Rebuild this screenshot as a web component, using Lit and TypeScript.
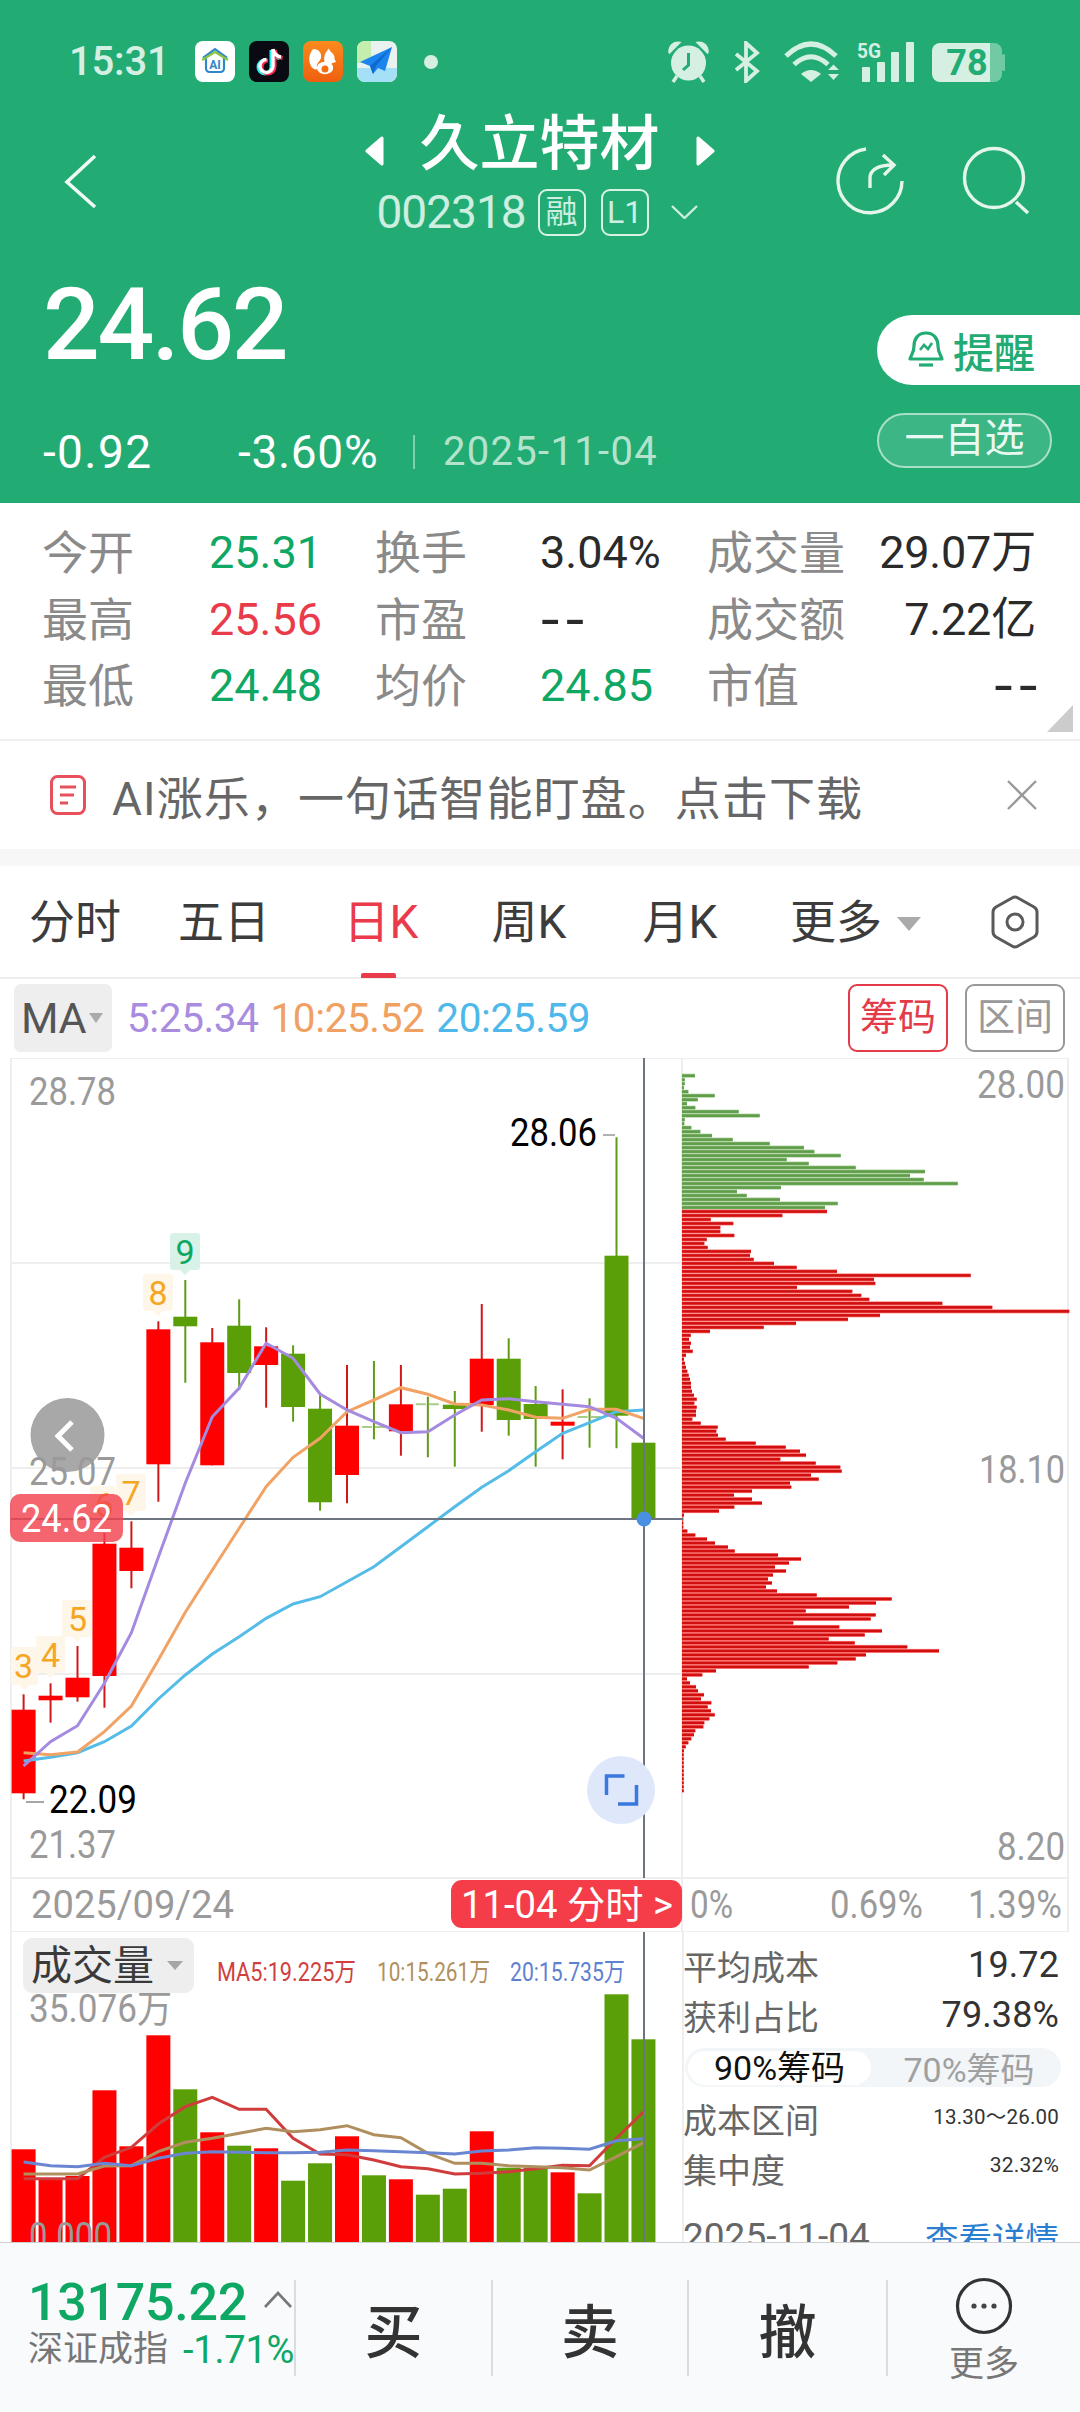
import { LitElement, html, css, svg } from "lit";
import { customElement } from "lit/decorators.js";

const SANS = `Roboto, "Noto Sans CJK SC", sans-serif`;
const cx = (i: number) => 23.6 + 26.95 * i;

// [isRed, bodyTop, bodyBottom, wickTop, wickBottom]; body 0 height means a flat doji
const candles: [number, number, number, number, number][] = [
  [1, 1709.7, 1793.3, 1694.3, 1799.3], [1, 1695.7, 1700.3, 1683.3, 1722.7], [1, 1677.7, 1697.3, 1646, 1701.7],
  [1, 1543.7, 1676, 1533, 1707.7], [1, 1547.7, 1571, 1521.3, 1588.3], [1, 1329.3, 1464.3, 1321.3, 1501.7],
  [0, 1316.7, 1326.3, 1280, 1382.7], [1, 1342.3, 1465.3, 1328, 1465.3], [0, 1325.7, 1373, 1299.3, 1390],
  [1, 1346.3, 1365, 1327.3, 1407.7], [0, 1353.7, 1407, 1345.3, 1421.7], [0, 1408.7, 1502.3, 1395.3, 1510.7],
  [1, 1425.7, 1475, 1365, 1503.3], [0, 1427, 1428.4, 1361, 1439.3], [1, 1404.3, 1431.3, 1365, 1455.7],
  [0, 1404.3, 1405.7, 1396.7, 1457.3], [0, 1404.7, 1409, 1391, 1466.7], [1, 1358.7, 1405, 1304, 1431.7],
  [0, 1358.7, 1420, 1338.3, 1435.7], [0, 1404, 1419, 1386, 1466.7], [1, 1421.7, 1425.7, 1389.3, 1459.3],
  [0, 1417, 1418.4, 1398.3, 1447.7], [0, 1255.7, 1415.7, 1137.3, 1448.3], [0, 1442.7, 1518.3, 1442.7, 1518.3],
];

const ma5 = [1766, 1741.7, 1725.7, 1683.3, 1632.7, 1557.3, 1483, 1416.7, 1388, 1343.3, 1358.3, 1394, 1410, 1421.7, 1432.7, 1431.7, 1415, 1400, 1398.7, 1401.7, 1404.3, 1406.7, 1418.3, 1438.3];
const ma10 = [1752.7, 1754.7, 1752, 1731.7, 1706, 1660, 1612.3, 1570, 1528.3, 1486.7, 1457.3, 1438.3, 1411.7, 1400, 1387.7, 1394.3, 1404, 1405, 1410, 1417.3, 1418.3, 1409.3, 1409.3, 1418.3];
const ma20 = [1761, 1757.3, 1752.7, 1741.7, 1726, 1699, 1675, 1654, 1636.7, 1618.3, 1604, 1596.7, 1581.7, 1566.7, 1546.7, 1526.7, 1506.7, 1487.3, 1470.7, 1451.7, 1433.3, 1422.7, 1411.7, 1410];

const greenRows = [75, 44, 44, 42, 55, 134, 83, 51, 76, 206, 269, 44, 43, 64, 91, 126, 188, 299, 402, 433, 512, 350, 416, 557, 765, 720, 761, 863, 333, 201, 230, 330, 503, 465];
const redRows = [471, 337, 122, 190, 151, 151, 193, 110, 103, 113, 243, 240, 251, 312, 380, 501, 902, 612, 616, 381, 547, 574, 598, 817, 967, 1198, 630, 534, 378, 281, 120, 62, 57, 63, 60, 68, 48, 42, 45, 48, 52, 56, 60, 63, 63, 66, 72, 80, 73, 80, 78, 78, 67, 92, 143, 139, 144, 167, 257, 347, 390, 408, 331, 437, 511, 515, 423, 446, 360, 364, 246, 192, 246, 276, 193, 147, 42, 40, 40, 40, 52, 76, 111, 135, 174, 194, 324, 393, 357, 315, 348, 309, 294, 306, 288, 321, 440, 665, 618, 537, 407, 617, 602, 370, 508, 636, 584, 476, 554, 712, 807, 588, 557, 502, 416, 138, 97, 51, 60, 78, 84, 102, 93, 124, 113, 123, 134, 118, 103, 100, 76, 72, 64, 55, 47, 42, 41, 41, 41, 41, 41, 41, 41, 41, 41, 41];

const volumes: [number, number][] = [
  [1, 2149.3], [1, 2178.3], [1, 2176], [1, 2090.3], [1, 2146.3], [1, 2035.3], [0, 2089.3], [1, 2132.3],
  [0, 2145.7], [1, 2148.3], [0, 2180.7], [0, 2163.3], [1, 2136.3], [0, 2175.3], [1, 2179.3], [0, 2194.7],
  [0, 2188.7], [1, 2131.3], [0, 2167.7], [0, 2168], [1, 2172.3], [0, 2193.3], [0, 1994.3], [0, 2039.3],
];
const vma = (a: number[]) => a.map((z, i) => `${cx(i).toFixed(1)},${(1900 + z / 3).toFixed(1)}`).join(" ");
const v5 = [836, 836, 836, 772, 742, 672, 620, 592, 628, 628, 715, 762, 764, 780, 800, 806, 822, 820, 815, 806, 796, 797, 715, 635];
const v10 = [822, 822, 822, 798, 797, 755, 727, 715, 700, 685, 695, 689, 677, 704, 713, 760, 790, 790, 797, 800, 803, 810, 770, 728];
const v20 = [786, 797, 800, 790, 797, 775, 760, 755, 757, 758, 758, 757, 750, 752, 755, 758, 762, 753, 750, 743, 745, 748, 722, 716];

const line = (a: number[]) => a.map((y, i) => `${cx(i).toFixed(1)},${y}`).join(" ");

const numTags: [string, number, number, number, number, number][] = [
  // text, boxX, boxY, boxW, boxH, text centre
  ["6", 90, 1486, 25, 38, 104], ["3", 11, 1647, 27, 38, 23.6], ["4", 36, 1636, 29, 37, 50.5], ["5", 62, 1600, 30, 37, 77.6],
  ["7", 116, 1474, 30, 37, 131], ["8", 143, 1274, 30, 37, 158],
];

@customElement("app-root")
export class AppRoot extends LitElement {
  static styles = css`
    :host { display: block; width: 1080px; height: 2412px; overflow: hidden; background: #fff; font-family: ${css([SANS] as any)}; position: relative; }
    svg { display: block; flex: none; }

    .head { height: 503px; background: #22ac73; color: #fff; box-sizing: border-box; }
    .status { height: 113px; box-sizing: border-box; padding: 41px 75px 0 69px; display: flex; align-items: flex-start; }
    .time { width: 126px; font-size: 40px; line-height: 42px; color: #d5efe3; font-weight: 500; letter-spacing: -0.2px; }
    .apps { display: flex; gap: 14px; }
    .dot { width: 14px; height: 14px; border-radius: 50%; background: #d5efe3; margin: 14px 0 0 27px; }
    .sysicons { margin-left: auto; display: flex; align-items: flex-start; }
    .nav { height: 122px; display: grid; grid-template-columns: 1fr 360px 1fr; }
    .back { padding: 40px 0 0 64px; }
    .center { display: flex; flex-direction: column; align-items: center; }
    .titlerow { display: flex; align-items: center; gap: 35px; height: 64px; }
    .tri { margin-top: 12px; }
    .title { font-size: 60px; line-height: 64px; font-weight: 500; white-space: nowrap; }
    .subrow { display: flex; align-items: center; height: 48px; margin-top: 11px; margin-right: 6px; color: #cdeee0; }
    .code { font-size: 46px; line-height: 48px; letter-spacing: -1px; width: 161px; }
    .badge { box-sizing: border-box; width: 48px; height: 47px; border: 2px solid #d9f2e7; border-radius: 9px; display: flex; align-items: center; justify-content: center; font-size: 32px; line-height: 1; margin-right: 15px; }
    .chev { margin-left: 7px; }
    .actions { display: flex; justify-content: flex-end; gap: 58px; padding: 33px 48px 0 0; align-items: flex-start; }
    .pricezone { display: flex; justify-content: space-between; height: 268px; box-sizing: border-box; }
    .priceleft { padding-top: 40px; }
    .price { font-size: 100px; line-height: 100px; font-weight: 500; margin-left: 43px; letter-spacing: -2.4px; }
    .changes { display: flex; align-items: center; height: 46px; margin-top: 54px; font-size: 46px; line-height: 46px; padding-left: 43px; }
    .c1 { width: 195px; letter-spacing: 1.4px; }
    .c2 { width: 175px; letter-spacing: 0.7px; }
    .sep { width: 2px; height: 34px; background: #7fd0ac; margin-right: 28px; }
    .date { font-size: 40px; color: #b4e3cd; letter-spacing: 1.3px; }
    .priceright { width: 203px; padding-top: 80px; }
    .remind { height: 70px; background: #fff; border-radius: 35px 0 0 35px; display: flex; align-items: center; padding-left: 31px; gap: 9px; color: #22ac73; font-size: 41px; font-weight: 500; }
    .fav { box-sizing: border-box; width: 175px; height: 55px; margin-top: 28px; border: 2px solid #a9dfc6; background: rgba(255,255,255,0.12); border-radius: 28px; text-align: center; font-size: 40px; line-height: 48px; color: #e9f8f1; }

    .stats { position: relative; box-sizing: border-box; height: 236px; padding: 17px 0 0 42px; display: grid; grid-template-columns: 167px 166px 165px 167px 130px 199px; grid-auto-rows: 66.5px; align-items: center; }
    .lb { font-size: 46px; line-height: 54px; color: #8a8a8a; white-space: nowrap; }
    .val { font-size: 45px; line-height: 54px; color: #2a2a2a; white-space: nowrap; }
    .up { color: #ea3b4b; }
    .down { color: #0ea764; }
    .end { text-align: right; letter-spacing: -0.2px; }
    .dash { display: inline-block; transform: scaleX(1.35); transform-origin: left center; letter-spacing: 3px; font-weight: 500; }
    .end .dash { transform-origin: right center; letter-spacing: 3px; margin-right: -7px; }
    .corner { position: absolute; right: 7px; bottom: 7px; width: 26px; height: 27px; background: #cccccc; clip-path: polygon(100% 0, 100% 100%, 0 100%); }
    .rule { height: 2px; background: #f0f0f0; }
    .banner { height: 108px; display: flex; align-items: center; padding: 0 42px 0 50px; color: #666; font-size: 46px; letter-spacing: 1.1px; white-space: nowrap; }
    .banner span { margin-left: 26px; }
    .banner svg:last-child { margin-left: auto; }
    .band { height: 17px; background: #f7f7f7; }

    .tabs { height: 111px; border-bottom: 2px solid #eeeeee; display: grid; grid-template-columns: 150px 148px 166px 130px 172px 1fr; align-items: center; font-size: 46px; line-height: 54px; color: #3c3c3c; }
    .tab { text-align: center; white-space: nowrap; }
    .tab.on { color: #ea3b4b; position: relative; }
    .tab.on::after { content: ""; position: absolute; left: 63px; top: 78px; width: 35px; height: 5px; border-radius: 2px 2px 0 0; background: #ea3b4b; }
    .more { display: flex; align-items: center; padding: 0 40px 0 24px; }
    .more i { width: 0; height: 0; border: 12px solid transparent; border-top: 14px solid #aaa; border-bottom: 0; margin: 4px 0 0 15px; }
    .more svg { margin-left: auto; }

    .maline { height: 79px; box-sizing: border-box; padding: 5px 15px 0 14px; display: flex; align-items: flex-start; }
    .machip { width: 98px; height: 68px; background: #eeeeee; border-radius: 7px; display: flex; align-items: center; padding-left: 7px; box-sizing: border-box; color: #555; font-size: 43px; letter-spacing: -0.5px; }
    .machip i { width: 0; height: 0; border: 7px solid transparent; border-top: 10px solid #aaa; border-bottom: 0; margin-left: 3px; }
    .mas { display: flex; gap: 12px; margin-left: 15px; font-size: 40.5px; line-height: 68px; letter-spacing: -0.4px; white-space: nowrap; }
    .m5 { color: #a98ce0; } .m10 { color: #f0a060; } .m20 { color: #4fb8ea; }
    .mabtns { margin-left: auto; display: flex; gap: 17px; }
    .mabtn { box-sizing: border-box; width: 100px; height: 68px; border: 2px solid #999; border-radius: 9px; color: #999; font-size: 38px; line-height: 62px; text-align: center; }
    .mabtn.red { border-color: #e33b47; color: #e33b47; }

    .t-axis { font-size: 38px; fill: #9a9a9a; font-family: ${css([SANS] as any)}; }
    .t-black { font-size: 38px; fill: #000; font-family: ${css([SANS] as any)}; }
    .t-white { font-size: 38px; fill: #fff; font-family: ${css([SANS] as any)}; }
    .t-num { font-size: 34px; fill: #f5a623; font-family: ${css([SANS] as any)}; text-anchor: middle; }
    .t-nine { font-size: 34px; fill: #0ea764; font-family: ${css([SANS] as any)}; text-anchor: middle; }
    .t-vol { font-size: 41px; fill: #3a3a3a; font-family: ${css([SANS] as any)}; }
    .t-ma { font-size: 26px; font-family: ${css([SANS] as any)}; }

    .lower { height: 310px; overflow: hidden; display: flex; }
    .panel { box-sizing: border-box; flex: 1; border-left: 2px solid #eeeeee; padding: 8px 21px 0 0; color: #666; }
    .prow { display: flex; justify-content: space-between; align-items: center; height: 50px; font-size: 34px; white-space: nowrap; margin-left: -1px; }
    .prow b { font-weight: 400; color: #333; font-size: 36px; letter-spacing: 0.1px; }
    .prow small { color: #333; font-size: 20.500px; margin-top: -6px; letter-spacing: 0.2px; }
    .prow small.pct { font-size: 21px; }
    .pill { height: 39px; margin: 8px -2px 6px 1px; background: #f2f6f9; border-radius: 20px; display: flex; align-items: center; font-size: 34px; white-space: nowrap; }
    .pill span { flex: none; box-sizing: border-box; }
    .pill .pon { width: 183px; height: 34px; line-height: 34px; margin-left: 3px; background: #fff; border-radius: 17px; color: #111; text-align: center; }
    .pill .poff { flex: 1; text-align: center; color: #a0a0a0; padding-left: 6px; }
    .prow.last { margin-top: 18px; }
    .prow.last b { color: #666; font-size: 37px; letter-spacing: 0; }
    .prow.last a { color: #2b7fd0; font-size: 33.5px; }

    .foot { height: 170px; box-sizing: border-box; background: #f9fafc; border-top: 1px solid #cfcfcf; display: flex; padding-top: 37px; }
    .index { box-sizing: border-box; width: 294px; padding-left: 28px; }
    .idx { display: flex; align-items: center; font-size: 52px; line-height: 52px; color: #0ea764; font-weight: 500; letter-spacing: -0.3px; height: 52px; margin-top: -3px; }
    .idx svg { margin-left: 17px; margin-top: -8px; }
    .idx2 { display: flex; align-items: center; margin-top: -1px; height: 44px; line-height: 44px; font-size: 35px; color: #777; white-space: nowrap; }
    .idx2 span { margin-left: 15px; font-size: 38px; color: #0ea764; letter-spacing: -0.2px; }
    .fbtn { box-sizing: border-box; height: 96px; border-left: 2px solid #dcdcdc; display: flex; align-items: center; justify-content: center; font-size: 58px; color: #333; font-weight: 500; }
    .w197 { width: 197px; }
    .w196 { width: 196px; }
    .w199 { width: 199px; }
    .fmore { flex-direction: column; font-size: 35px; color: #777; font-weight: 400; justify-content: flex-start; width: 194px; }
    .fmore svg { margin-top: -3px; }
    .fmore span { margin-top: 8px; line-height: 44px; }
  `;

  private candles() {
    return candles.map((c, i) => {
      const [red, t, b, wt, wb] = c;
      const x = cx(i);
      const body = red ? "#ff0000" : "#5a9e08";
      const wick = red ? "#d01818" : "#5f9c14";
      const flat = b - t < 2;
      return svg`
        <line x1=${x} x2=${x} y1=${wt} y2=${wb} stroke=${wick} stroke-width="2" />
        ${flat
          ? svg`<line x1=${x - 12} x2=${x + 12} y1=${t} y2=${t} stroke="#a9cc86" stroke-width="2" stroke-dasharray="10 3" />`
          : svg`<rect x=${x - 12} y=${t} width="24" height=${b - t} fill=${body} />`}
      `;
    });
  }

  private chips() {
    const n = greenRows.length + redRows.length;
    const step = (1790.7 - 1075.7) / (n - 1);
    const rows = [...greenRows.map((w) => [w, 0]), ...redRows.map((w) => [w, 1])];
    return rows.map(([w, r], i) => {
      const y = 1075.7 + i * step;
      const wd = ((w - 36) / 3).toFixed(1);
      return svg`
        <rect x="682" y=${(y - step / 2).toFixed(2)} width=${wd} height=${step.toFixed(2)} fill=${r ? "#ff5c5c" : "#8fbf7c"} fill-opacity="0.8" />
        <rect x="682" y=${(y - 1.3).toFixed(2)} width=${wd} height="2.6" fill=${r ? "#d20f0f" : "#5f9d49"} />`;
    });
  }

  private tagBox(x: number, y: number, w: number, h: number, fill: string) {
    return svg`<path d="M${x + 3} ${y}h${w - 6}q3 0 3 3v${h - 6}q0 3 -3 3h${-(w / 2 - 8)}l-5 5l-5 -5h${-(w / 2 - 8)}q-3 0 -3 -3v${-(h - 6)}q0 -3 3 -3z" fill=${fill} />`;
  }

  private chart() {
    return html`
      <svg width="1080" height="874" viewBox="0 1058 1080 874">
        <g fill="#eeeeee">
          <rect x="10" y="1057" width="1059" height="2" />
          <rect x="10" y="1262" width="672" height="2" />
          <rect x="10" y="1467" width="672" height="2" />
          <rect x="10" y="1673" width="672" height="2" />
          <rect x="10" y="1877" width="1059" height="2" />
          <rect x="10" y="1931" width="1059" height="2" />
          <rect x="10" y="1058" width="2" height="874" />
          <rect x="681" y="1058" width="2" height="874" />
          <rect x="1067" y="1058" width="2" height="874" />
        </g>
        ${this.chips()}
        ${numTags.map(([t, x, y, w, h, c]) => svg`${this.tagBox(x, y, w, h, "#fff6ea")}<text class="t-num" x=${c} y=${y + 31}>${t}</text>`)}
        ${this.tagBox(170, 1233, 30, 37, "#d8f2e8")}
        <text class="t-nine" x="185" y="1264">9</text>
        ${this.candles()}
        <polyline points=${line(ma20)} fill="none" stroke="#55bce8" stroke-width="3" />
        <polyline points=${line(ma10)} fill="none" stroke="#f1a365" stroke-width="3" />
        <polyline points=${line(ma5)} fill="none" stroke="#a48bdf" stroke-width="3" />
        <line x1="644" x2="644" y1="1058" y2="1878" stroke="#6c7580" stroke-width="2" />
        <line x1="11" x2="683" y1="1519" y2="1519" stroke="#6c7580" stroke-width="2" />
        <circle cx="644" cy="1519" r="7.5" fill="#4a90e2" />

        <circle cx="67.5" cy="1435" r="37" fill="#a8a8a8" />
        <path d="M72 1422l-14 14l14 14" fill="none" stroke="#fff" stroke-width="5" />
        <text class="t-axis" x="29" y="1105" textLength="87" lengthAdjust="spacingAndGlyphs">28.78</text>
        <text class="t-axis" x="29" y="1485" textLength="87" lengthAdjust="spacingAndGlyphs">25.07</text>
        <text class="t-axis" x="29" y="1858" textLength="87" lengthAdjust="spacingAndGlyphs">21.37</text>
        <text class="t-black" x="510" y="1146" textLength="87" lengthAdjust="spacingAndGlyphs">28.06</text>
        <line x1="603" x2="615" y1="1135" y2="1135" stroke="#999" stroke-width="1.5" />
        <text class="t-black" x="49" y="1813" textLength="88" lengthAdjust="spacingAndGlyphs">22.09</text>
        <line x1="26" x2="44" y1="1802" y2="1802" stroke="#888" stroke-width="1.5" />
        <rect x="10" y="1494" width="113" height="48" rx="10" fill="#f3434f" fill-opacity="0.82" />
        <text class="t-white" x="21" y="1532" textLength="91" lengthAdjust="spacingAndGlyphs">24.62</text>

        <circle cx="621" cy="1790" r="34" fill="#dfe8fb" />
        <path d="M624.5 1776H606.5V1795M618 1804H636.5V1785" fill="none" stroke="#3a78e0" stroke-width="3.5" />

        <text class="t-axis" x="1065" y="1098" text-anchor="end" textLength="88" lengthAdjust="spacingAndGlyphs">28.00</text>
        <text class="t-axis" x="1065" y="1483" text-anchor="end" textLength="86" lengthAdjust="spacingAndGlyphs">18.10</text>
        <text class="t-axis" x="1065" y="1860" text-anchor="end" textLength="68" lengthAdjust="spacingAndGlyphs">8.20</text>
        <text class="t-axis" x="31" y="1918" textLength="203" lengthAdjust="spacingAndGlyphs">2025/09/24</text>
        <rect x="451" y="1880" width="231" height="48" rx="11" fill="#f53d4a" />
        <text class="t-white" x="461" y="1918" textLength="212" lengthAdjust="spacingAndGlyphs">11-04 分时 &gt;</text>
        <text class="t-axis" x="690" y="1918" textLength="43" lengthAdjust="spacingAndGlyphs">0%</text>
        <text class="t-axis" x="830" y="1918" textLength="93" lengthAdjust="spacingAndGlyphs">0.69%</text>
        <text class="t-axis" x="968" y="1918" textLength="94" lengthAdjust="spacingAndGlyphs">1.39%</text>
      </svg>
    `;
  }

  private volume() {
    return html`
      <svg width="682" height="310" viewBox="0 1932 682 310">
        <rect x="10" y="1932" width="2" height="310" fill="#eeeeee" />
        ${volumes.map(([r, t], i) => svg`<rect x=${cx(i) - 12} y=${t} width="24" height=${2242 - t} fill=${r ? "#ff0000" : "#5a9e08"} />`)}
        <polyline points=${vma(v5)} fill="none" stroke="#d03c3c" stroke-width="3" />
        <polyline points=${vma(v10)} fill="none" stroke="#b08f5f" stroke-width="3" />
        <polyline points=${vma(v20)} fill="none" stroke="#6a86d2" stroke-width="3" />
        <line x1="644" x2="644" y1="1932" y2="2242" stroke="#6c7580" stroke-width="2" />
        <rect x="23" y="1938" width="171" height="55" rx="9" fill="#eeeeee" />
        <text class="t-vol" x="31" y="1980">成交量</text>
        <path d="M167 1961h16l-8 9z" fill="#a5a5a5" />
        <text class="t-ma" x="217" y="1981" fill="#d04040" textLength="139" lengthAdjust="spacingAndGlyphs">MA5:19.225万</text>
        <text class="t-ma" x="377" y="1981" fill="#b09060" textLength="113" lengthAdjust="spacingAndGlyphs">10:15.261万</text>
        <text class="t-ma" x="510" y="1981" fill="#6080d0" textLength="115" lengthAdjust="spacingAndGlyphs">20:15.735万</text>
        <text class="t-axis" x="29" y="2022" textLength="143" lengthAdjust="spacingAndGlyphs">35.076万</text>
        <text class="t-axis" x="29" y="2250" textLength="83" lengthAdjust="spacingAndGlyphs">0.000</text>
      </svg>
    `;
  }

  private statusIcons() {
    return html`
      <div class="apps">
        <svg width="40" height="41" viewBox="0 0 40 41">
          <rect width="40" height="41" rx="8" fill="#fff" />
          <path d="M11 17V27.5A3.5 3.5 0 0 0 14.5 31H25.5A3.5 3.5 0 0 0 29 27.5V17" fill="none" stroke="#2f86c8" stroke-width="2.2" />
          <path d="M8 17L20 8L32 17" fill="none" stroke="#2f86c8" stroke-width="2.2" />
          <path d="M7 19L20 11L33 19" fill="none" stroke="#8cc63f" stroke-width="2.2" />
          <text x="20" y="28" font-size="12" font-weight="700" fill="#2f86c8" text-anchor="middle" font-family="Roboto">AI</text>
        </svg>
        <svg width="40" height="41" viewBox="0 0 40 41">
          <rect width="40" height="41" rx="8" fill="#0a0a12" />
          <path d="M24 8v17a6.5 6.5 0 1 1-6.5-6.5M24 8c1 4.5 4 7.5 8 8" fill="none" stroke="#25f4ee" stroke-width="4" transform="translate(-1.5 1)" />
          <path d="M24 8v17a6.5 6.5 0 1 1-6.5-6.5M24 8c1 4.5 4 7.5 8 8" fill="none" stroke="#fe2c55" stroke-width="4" transform="translate(1.5 1)" />
          <path d="M24 8v17a6.5 6.5 0 1 1-6.5-6.5M24 8c1 4.5 4 7.5 8 8" fill="none" stroke="#fff" stroke-width="3.4" />
        </svg>
        <svg width="40" height="41" viewBox="0 0 40 41">
          <defs><linearGradient id="ucg" x1="0" y1="0" x2="0" y2="1"><stop offset="0" stop-color="#fb8a1e" /><stop offset="1" stop-color="#ef5f0e" /></linearGradient></defs>
          <rect width="40" height="41" rx="8" fill="url(#ucg)" />
          <path d="M10 8C16 8 19 12 18 17C17 21 13 22 14 26C15 30 10 29 8 25C5 19 6 13 10 8z" fill="#fff" />
          <path d="M24 10L25.5 7.5L28 11C31 13 32 16 31.5 18L33 21L29.5 22C27.5 24 24 24 22 22.5C20.5 19 21 13 24 10z" fill="#fff" />
          <path d="M16 31C12 27 14 22 20 21C26 20 31 23 30 28C29 33 20 35 16 31z" fill="#fff" />
          <circle cx="22" cy="28" r="3.5" fill="#f46f10" />
        </svg>
        <svg width="40" height="41" viewBox="0 0 40 41">
          <rect width="40" height="41" rx="8" fill="#e9f2ee" />
          <path d="M8 0H14V22H0V8A8 8 0 0 1 8 0z" fill="#c4eeae" />
          <path d="M0 27H40V33A8 8 0 0 1 32 41H8A8 8 0 0 1 0 33z" fill="#a6e0f7" />
          <path d="M35 6L3 21L13 25L16 33L21 27L28 30z" fill="#1b84ee" />
          <path d="M35 6L13 25L16 33L19 25z" fill="#0f6ad0" />
        </svg>
      </div>
      <div class="dot"></div>
      <div class="sysicons">
        <svg width="337" height="42" viewBox="668 41 337 42">
          <circle cx="688.5" cy="63" r="17.5" fill="#d5efe3" />
          <path d="M669 52C669 45 674 41.5 680 42.5L669.5 53zM708 52C708 45 703 41.5 697 42.5L707.5 53z" fill="#d5efe3" stroke="#d5efe3" stroke-width="1.5" />
          <path d="M677 76L673 82M700 76L704 82" stroke="#d5efe3" stroke-width="3.5" fill="none" />
          <path d="M688.5 53V65L683 70" fill="none" stroke="#22ac73" stroke-width="3" />
          <path d="M736 54L757 71L746 81V43L757 53L736 70" fill="none" stroke="#d5efe3" stroke-width="3.8" />
          <g fill="none" stroke="#d5efe3" stroke-width="5">
            <path d="M786 56Q811 32 836 56" />
            <path d="M794 64.5Q811 49 828 64.5" />
          </g>
          <path d="M801 74Q811 66 821 74L811 82z" fill="#d5efe3" />
          <path d="M828 70L833.5 64.5L839 70zM828 74L833.5 80L839 74z" fill="#d5efe3" />
          <text x="857" y="58" font-size="20" font-weight="700" fill="#d5efe3" font-family="Roboto" textLength="24" lengthAdjust="spacingAndGlyphs">5G</text>
          <g fill="#d5efe3">
            <rect x="862" y="67" width="8" height="15" rx="1" />
            <rect x="877" y="62" width="8" height="20" rx="1" />
            <rect x="891" y="52" width="8" height="30" rx="1" />
            <rect x="906" y="42" width="8" height="40" rx="1" />
          </g>
          <path d="M990 43H994A8 8 0 0 1 1002 51V74A8 8 0 0 1 994 82H990z" fill="#d5efe3" fill-opacity="0.45" />
          <rect x="1002" y="54" width="3.5" height="17" rx="1.75" fill="#d5efe3" fill-opacity="0.45" />
          <path d="M940 43H990V82H940A8 8 0 0 1 932 74V51A8 8 0 0 1 940 43z" fill="#d5efe3" />
          <text x="967" y="75" font-size="36" font-weight="700" fill="#22ac73" font-family="Roboto" text-anchor="middle">78</text>
        </svg>
      </div>
    `;
  }

  render() {
    return html`
      <header class="head">
        <div class="status"><span class="time">15:31</span>${this.statusIcons()}</div>
        <div class="nav">
          <div class="back">
            <svg width="36" height="58" viewBox="0 0 36 58"><path d="M31 3L3 29L31 54" fill="none" stroke="#f0faf5" stroke-width="3.6" /></svg>
          </div>
          <div class="center">
            <div class="titlerow">
              <svg class="tri" width="20" height="30" viewBox="0 0 20 30"><path d="M17 2L2 15L17 28z" fill="#fff" stroke="#fff" stroke-width="3" stroke-linejoin="round" /></svg>
              <div class="title">久立特材</div>
              <svg class="tri" width="21" height="30" viewBox="0 0 21 30"><path d="M3 2L18 15L3 28z" fill="#fff" stroke="#fff" stroke-width="3" stroke-linejoin="round" /></svg>
            </div>
            <div class="subrow">
              <span class="code">002318</span>
              <span class="badge">融</span>
              <span class="badge">L1</span>
              <svg class="chev" width="27" height="14" viewBox="0 0 27 14"><path d="M1 1L13.5 13L26 1" fill="none" stroke="#cdeee0" stroke-width="2.4" /></svg>
            </div>
          </div>
          <div class="actions">
            <svg width="68" height="70" viewBox="836 146 68 70">
              <path d="M866 149A32 32 0 1 0 902 181" fill="none" stroke="#e4f5ec" stroke-width="3.4" />
              <path d="M870 188V178C870 170 878 165 893 165M883 155L894 165L884 175" fill="none" stroke="#e4f5ec" stroke-width="3.4" />
            </svg>
            <svg width="70" height="70" viewBox="964 146 70 70">
              <circle cx="996" cy="178" r="29.5" fill="none" stroke="#e4f5ec" stroke-width="3.4" />
              <path d="M1018 202L1030 213" stroke="#e4f5ec" stroke-width="3.4" />
            </svg>
          </div>
        </div>
        <div class="pricezone">
          <div class="priceleft">
            <div class="price">24.62</div>
            <div class="changes">
              <span class="c1">-0.92</span>
              <span class="c2">-3.60%</span>
              <i class="sep"></i>
              <span class="date">2025-11-04</span>
            </div>
          </div>
          <div class="priceright">
            <div class="remind">
              <svg width="36" height="38" viewBox="0 0 36 38">
                <path d="M18 2C10 2 6 8 6 15C6 22 3 24 2 28H34C33 24 30 22 30 15C30 8 26 2 18 2z" fill="none" stroke="#22ac73" stroke-width="3.2" stroke-linejoin="round" />
                <path d="M11 34H25" stroke="#22ac73" stroke-width="3.2" />
                <path d="M12 19L16 14L20 18L24 12" fill="none" stroke="#22ac73" stroke-width="2.6" />
              </svg>
              <span>提醒</span>
            </div>
            <div class="fav">一自选</div>
          </div>
        </div>
      </header>

      <section class="stats">
        <span class="lb">今开</span><span class="val down">25.31</span><span class="lb">换手</span><span class="val">3.04%</span><span class="lb">成交量</span><span class="val end">29.07万</span>
        <span class="lb">最高</span><span class="val up">25.56</span><span class="lb">市盈</span><span class="val"><span class="dash">--</span></span><span class="lb">成交额</span><span class="val end">7.22亿</span>
        <span class="lb">最低</span><span class="val down">24.48</span><span class="lb">均价</span><span class="val down">24.85</span><span class="lb">市值</span><span class="val end"><span class="dash">--</span></span>
        <i class="corner"></i>
      </section>
      <div class="rule"></div>
      <section class="banner">
        <svg width="36" height="40" viewBox="0 0 36 40">
          <rect x="1.5" y="1.5" width="33" height="37" rx="6" fill="none" stroke="#e8505c" stroke-width="3" />
          <path d="M10 12H26M10 20H24M10 28H18" stroke="#e8505c" stroke-width="3" />
        </svg>
        <span>AI涨乐，一句话智能盯盘。点击下载</span>
        <svg width="32" height="32" viewBox="0 0 32 32"><path d="M2 2L30 30M30 2L2 30" stroke="#999" stroke-width="2.4" /></svg>
      </section>
      <div class="band"></div>
      <nav class="tabs">
        <span class="tab">分时</span>
        <span class="tab">五日</span>
        <span class="tab on">日K</span>
        <span class="tab">周K</span>
        <span class="tab">月K</span>
        <div class="more">
          <span>更多</span><i></i>
          <svg width="50" height="54" viewBox="0 0 50 54">
            <path d="M22 3Q25 1 28 3L44 12Q47 14 47 17V37Q47 40 44 42L28 51Q25 53 22 51L6 42Q3 40 3 37V17Q3 14 6 12z" fill="none" stroke="#5a5a5a" stroke-width="3" />
            <circle cx="25" cy="27" r="8" fill="none" stroke="#5a5a5a" stroke-width="3" />
          </svg>
        </div>
      </nav>
      <div class="maline">
        <div class="machip">MA<i></i></div>
        <div class="mas"><span class="m5">5:25.34</span><span class="m10">10:25.52</span><span class="m20">20:25.59</span></div>
        <div class="mabtns"><span class="mabtn red">筹码</span><span class="mabtn">区间</span></div>
      </div>
      ${this.chart()}
      <section class="lower">
        ${this.volume()}
        <div class="panel">
          <div class="prow"><span>平均成本</span><b>19.72</b></div>
          <div class="prow"><span>获利占比</span><b>79.38%</b></div>
          <div class="pill"><span class="pon">90%筹码</span><span class="poff">70%筹码</span></div>
          <div class="prow"><span>成本区间</span><small>13.30～26.00</small></div>
          <div class="prow"><span>集中度</span><small class="pct">32.32%</small></div>
          <div class="prow last"><b>2025-11-04</b><a>查看详情</a></div>
        </div>
      </section>
      <footer class="foot">
        <div class="index">
          <div class="idx">13175.22
            <svg width="28" height="17" viewBox="0 0 28 17"><path d="M1 16L14 2L27 16" fill="none" stroke="#777" stroke-width="2.6" /></svg>
          </div>
          <div class="idx2">深证成指<span>-1.71%</span></div>
        </div>
        <div class="fbtn w197">买</div>
        <div class="fbtn w196">卖</div>
        <div class="fbtn w199">撤</div>
        <div class="fbtn fmore">
          <svg width="58" height="58" viewBox="0 0 58 58">
            <circle cx="29" cy="29" r="26.5" fill="none" stroke="#333" stroke-width="3.2" />
            <circle cx="19" cy="29" r="2.6" fill="#444" /><circle cx="29" cy="29" r="2.6" fill="#444" /><circle cx="39" cy="29" r="2.6" fill="#444" />
          </svg>
          <span>更多</span>
        </div>
      </footer>
    `;
  }
}
